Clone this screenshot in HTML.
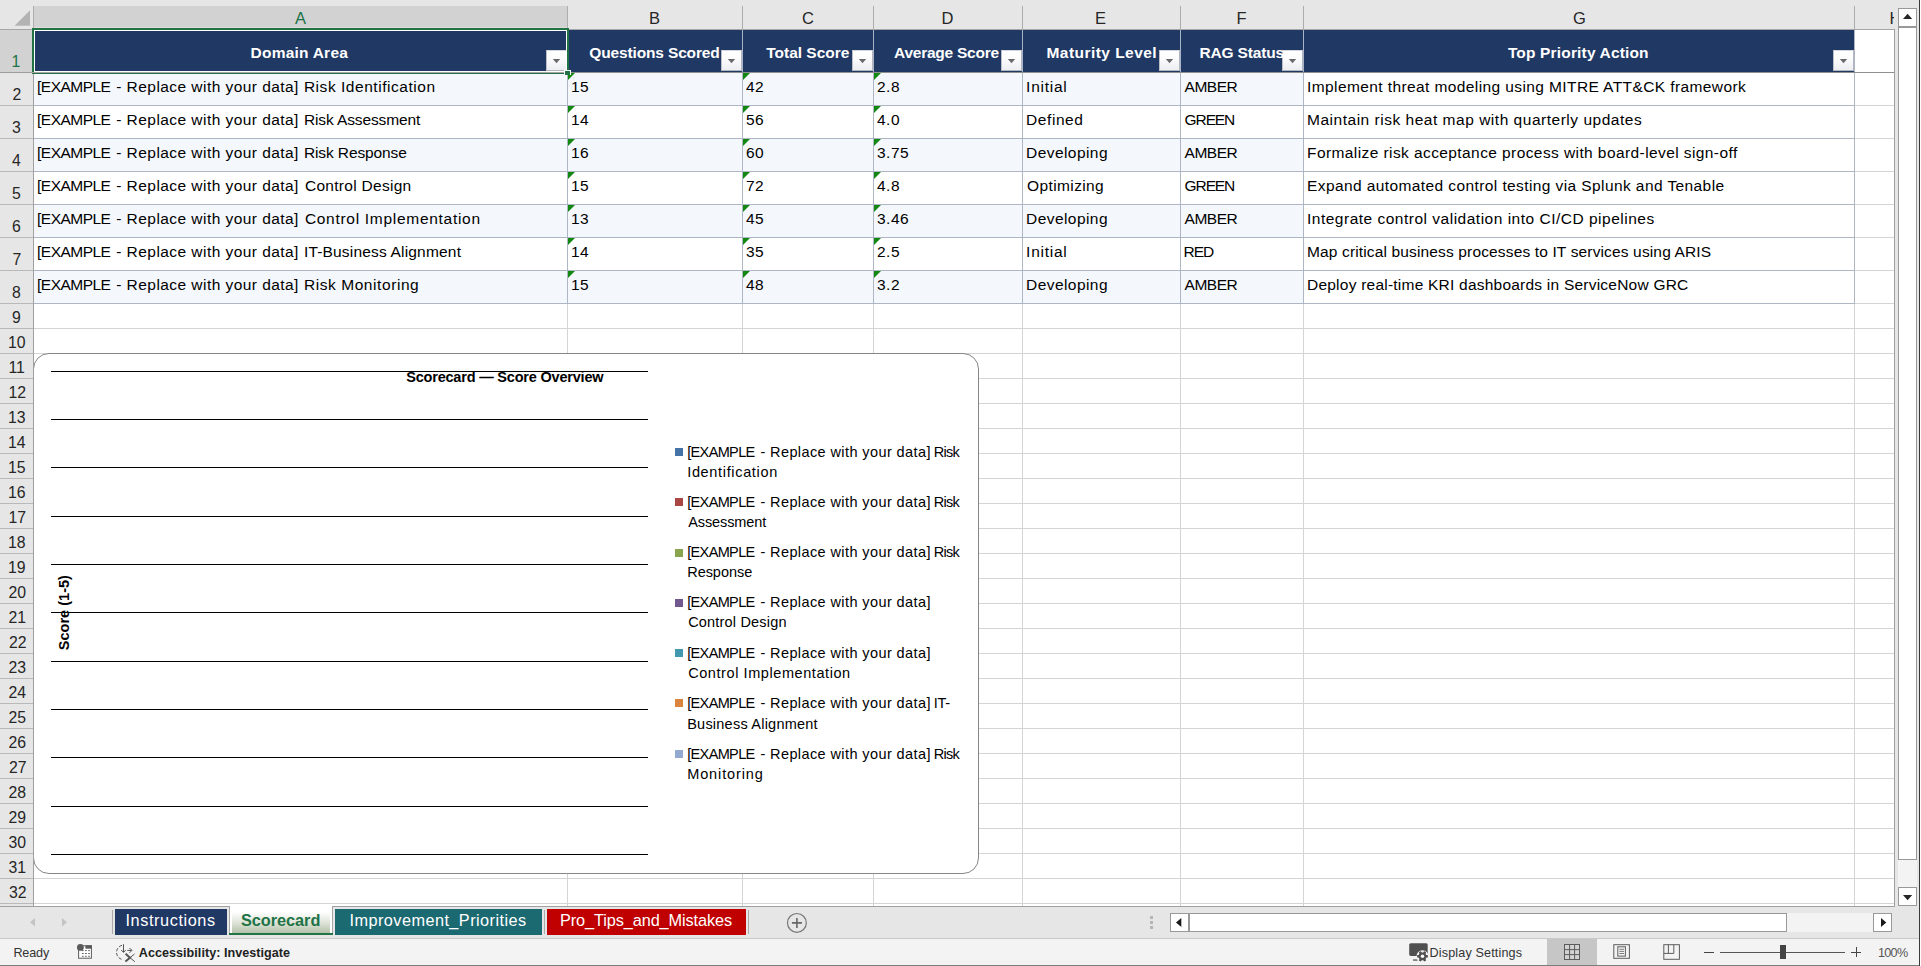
<!DOCTYPE html>
<html lang="en"><head><meta charset="utf-8"><title>Scorecard</title><style>
html,body{margin:0;padding:0}
body{width:1921px;height:966px;overflow:hidden;background:#e6e6e6;position:relative;font-family:"Liberation Sans",sans-serif}
.b{position:absolute}
.t{position:absolute;white-space:pre;color:#000}
svg{position:absolute;overflow:visible}
.fb{width:21px;height:21px;box-sizing:border-box;background:linear-gradient(#fff,#fcfcfd 40%,#eceef3);border:1px solid;border-color:#d4d5da #b1b5c0 #b4b6bd #bbbec7}
.sb{background:#fff;border:1px solid #999}
</style></head><body>
<div class="b" style="left:34px;top:30px;width:1860px;height:876px;background:#fff;"></div>
<div class="b" style="left:34px;top:6px;width:533px;height:22px;background:#d2d2d2;"></div>
<div class="b" style="left:34px;top:27px;width:533px;height:1px;background:#e0dcdc;"></div>
<div class="b" style="left:0px;top:29px;width:1895px;height:1px;background:#a6a6a6;"></div>
<div class="b" style="left:33px;top:6px;width:1px;height:23px;background:#adadad;"></div>
<div class="b" style="left:567px;top:6px;width:1px;height:23px;background:#adadad;"></div>
<div class="b" style="left:742px;top:6px;width:1px;height:23px;background:#adadad;"></div>
<div class="b" style="left:873px;top:6px;width:1px;height:23px;background:#adadad;"></div>
<div class="b" style="left:1022px;top:6px;width:1px;height:23px;background:#adadad;"></div>
<div class="b" style="left:1180px;top:6px;width:1px;height:23px;background:#adadad;"></div>
<div class="b" style="left:1303px;top:6px;width:1px;height:23px;background:#adadad;"></div>
<div class="b" style="left:1854px;top:6px;width:1px;height:23px;background:#adadad;"></div>
<div class="b" style="left:0px;top:30px;width:33px;height:42px;background:#d2d2d2;"></div>
<div class="b" style="left:0px;top:72px;width:33px;height:1px;background:#b9b9b9;"></div>
<div class="b" style="left:0px;top:105px;width:33px;height:1px;background:#b9b9b9;"></div>
<div class="b" style="left:0px;top:138px;width:33px;height:1px;background:#b9b9b9;"></div>
<div class="b" style="left:0px;top:171px;width:33px;height:1px;background:#b9b9b9;"></div>
<div class="b" style="left:0px;top:204px;width:33px;height:1px;background:#b9b9b9;"></div>
<div class="b" style="left:0px;top:237px;width:33px;height:1px;background:#b9b9b9;"></div>
<div class="b" style="left:0px;top:270px;width:33px;height:1px;background:#b9b9b9;"></div>
<div class="b" style="left:0px;top:303px;width:33px;height:1px;background:#b9b9b9;"></div>
<div class="b" style="left:0px;top:328px;width:33px;height:1px;background:#b9b9b9;"></div>
<div class="b" style="left:0px;top:353px;width:33px;height:1px;background:#b9b9b9;"></div>
<div class="b" style="left:0px;top:378px;width:33px;height:1px;background:#b9b9b9;"></div>
<div class="b" style="left:0px;top:403px;width:33px;height:1px;background:#b9b9b9;"></div>
<div class="b" style="left:0px;top:428px;width:33px;height:1px;background:#b9b9b9;"></div>
<div class="b" style="left:0px;top:453px;width:33px;height:1px;background:#b9b9b9;"></div>
<div class="b" style="left:0px;top:478px;width:33px;height:1px;background:#b9b9b9;"></div>
<div class="b" style="left:0px;top:503px;width:33px;height:1px;background:#b9b9b9;"></div>
<div class="b" style="left:0px;top:528px;width:33px;height:1px;background:#b9b9b9;"></div>
<div class="b" style="left:0px;top:553px;width:33px;height:1px;background:#b9b9b9;"></div>
<div class="b" style="left:0px;top:578px;width:33px;height:1px;background:#b9b9b9;"></div>
<div class="b" style="left:0px;top:603px;width:33px;height:1px;background:#b9b9b9;"></div>
<div class="b" style="left:0px;top:628px;width:33px;height:1px;background:#b9b9b9;"></div>
<div class="b" style="left:0px;top:653px;width:33px;height:1px;background:#b9b9b9;"></div>
<div class="b" style="left:0px;top:678px;width:33px;height:1px;background:#b9b9b9;"></div>
<div class="b" style="left:0px;top:703px;width:33px;height:1px;background:#b9b9b9;"></div>
<div class="b" style="left:0px;top:728px;width:33px;height:1px;background:#b9b9b9;"></div>
<div class="b" style="left:0px;top:753px;width:33px;height:1px;background:#b9b9b9;"></div>
<div class="b" style="left:0px;top:778px;width:33px;height:1px;background:#b9b9b9;"></div>
<div class="b" style="left:0px;top:803px;width:33px;height:1px;background:#b9b9b9;"></div>
<div class="b" style="left:0px;top:828px;width:33px;height:1px;background:#b9b9b9;"></div>
<div class="b" style="left:0px;top:853px;width:33px;height:1px;background:#b9b9b9;"></div>
<div class="b" style="left:0px;top:878px;width:33px;height:1px;background:#b9b9b9;"></div>
<div class="b" style="left:0px;top:903px;width:33px;height:1px;background:#b9b9b9;"></div>
<div class="b" style="left:33px;top:30px;width:1px;height:876px;background:#a0a0a0;"></div>
<div class="b" style="left:34px;top:72px;width:1860px;height:1px;background:#d4d4d4;"></div>
<div class="b" style="left:34px;top:105px;width:1860px;height:1px;background:#d4d4d4;"></div>
<div class="b" style="left:34px;top:138px;width:1860px;height:1px;background:#d4d4d4;"></div>
<div class="b" style="left:34px;top:171px;width:1860px;height:1px;background:#d4d4d4;"></div>
<div class="b" style="left:34px;top:204px;width:1860px;height:1px;background:#d4d4d4;"></div>
<div class="b" style="left:34px;top:237px;width:1860px;height:1px;background:#d4d4d4;"></div>
<div class="b" style="left:34px;top:270px;width:1860px;height:1px;background:#d4d4d4;"></div>
<div class="b" style="left:34px;top:303px;width:1860px;height:1px;background:#d4d4d4;"></div>
<div class="b" style="left:34px;top:328px;width:1860px;height:1px;background:#d4d4d4;"></div>
<div class="b" style="left:34px;top:353px;width:1860px;height:1px;background:#d4d4d4;"></div>
<div class="b" style="left:34px;top:378px;width:1860px;height:1px;background:#d4d4d4;"></div>
<div class="b" style="left:34px;top:403px;width:1860px;height:1px;background:#d4d4d4;"></div>
<div class="b" style="left:34px;top:428px;width:1860px;height:1px;background:#d4d4d4;"></div>
<div class="b" style="left:34px;top:453px;width:1860px;height:1px;background:#d4d4d4;"></div>
<div class="b" style="left:34px;top:478px;width:1860px;height:1px;background:#d4d4d4;"></div>
<div class="b" style="left:34px;top:503px;width:1860px;height:1px;background:#d4d4d4;"></div>
<div class="b" style="left:34px;top:528px;width:1860px;height:1px;background:#d4d4d4;"></div>
<div class="b" style="left:34px;top:553px;width:1860px;height:1px;background:#d4d4d4;"></div>
<div class="b" style="left:34px;top:578px;width:1860px;height:1px;background:#d4d4d4;"></div>
<div class="b" style="left:34px;top:603px;width:1860px;height:1px;background:#d4d4d4;"></div>
<div class="b" style="left:34px;top:628px;width:1860px;height:1px;background:#d4d4d4;"></div>
<div class="b" style="left:34px;top:653px;width:1860px;height:1px;background:#d4d4d4;"></div>
<div class="b" style="left:34px;top:678px;width:1860px;height:1px;background:#d4d4d4;"></div>
<div class="b" style="left:34px;top:703px;width:1860px;height:1px;background:#d4d4d4;"></div>
<div class="b" style="left:34px;top:728px;width:1860px;height:1px;background:#d4d4d4;"></div>
<div class="b" style="left:34px;top:753px;width:1860px;height:1px;background:#d4d4d4;"></div>
<div class="b" style="left:34px;top:778px;width:1860px;height:1px;background:#d4d4d4;"></div>
<div class="b" style="left:34px;top:803px;width:1860px;height:1px;background:#d4d4d4;"></div>
<div class="b" style="left:34px;top:828px;width:1860px;height:1px;background:#d4d4d4;"></div>
<div class="b" style="left:34px;top:853px;width:1860px;height:1px;background:#d4d4d4;"></div>
<div class="b" style="left:34px;top:878px;width:1860px;height:1px;background:#d4d4d4;"></div>
<div class="b" style="left:34px;top:903px;width:1860px;height:1px;background:#d4d4d4;"></div>
<div class="b" style="left:567px;top:30px;width:1px;height:876px;background:#d4d4d4;"></div>
<div class="b" style="left:742px;top:30px;width:1px;height:876px;background:#d4d4d4;"></div>
<div class="b" style="left:873px;top:30px;width:1px;height:876px;background:#d4d4d4;"></div>
<div class="b" style="left:1022px;top:30px;width:1px;height:876px;background:#d4d4d4;"></div>
<div class="b" style="left:1180px;top:30px;width:1px;height:876px;background:#d4d4d4;"></div>
<div class="b" style="left:1303px;top:30px;width:1px;height:876px;background:#d4d4d4;"></div>
<div class="b" style="left:1854px;top:30px;width:1px;height:876px;background:#d4d4d4;"></div>
<div class="b" style="left:34px;top:30px;width:1820px;height:42px;background:#1f3864;"></div>
<div class="b" style="left:567px;top:30px;width:1px;height:42px;background:#aab3c5;"></div>
<div class="b" style="left:742px;top:30px;width:1px;height:42px;background:#aab3c5;"></div>
<div class="b" style="left:873px;top:30px;width:1px;height:42px;background:#aab3c5;"></div>
<div class="b" style="left:1022px;top:30px;width:1px;height:42px;background:#aab3c5;"></div>
<div class="b" style="left:1180px;top:30px;width:1px;height:42px;background:#aab3c5;"></div>
<div class="b" style="left:1303px;top:30px;width:1px;height:42px;background:#aab3c5;"></div>
<div class="b" style="left:34px;top:73px;width:1269px;height:32px;background:#f4f7fc;"></div>
<div class="b" style="left:34px;top:139px;width:1269px;height:32px;background:#f4f7fc;"></div>
<div class="b" style="left:34px;top:205px;width:1269px;height:32px;background:#f4f7fc;"></div>
<div class="b" style="left:34px;top:271px;width:1269px;height:32px;background:#f4f7fc;"></div>
<div class="b" style="left:34px;top:72px;width:1821px;height:1px;background:#aeb6c4;"></div>
<div class="b" style="left:34px;top:105px;width:1821px;height:1px;background:#aeb6c4;"></div>
<div class="b" style="left:34px;top:138px;width:1821px;height:1px;background:#aeb6c4;"></div>
<div class="b" style="left:34px;top:171px;width:1821px;height:1px;background:#aeb6c4;"></div>
<div class="b" style="left:34px;top:204px;width:1821px;height:1px;background:#aeb6c4;"></div>
<div class="b" style="left:34px;top:237px;width:1821px;height:1px;background:#aeb6c4;"></div>
<div class="b" style="left:34px;top:270px;width:1821px;height:1px;background:#aeb6c4;"></div>
<div class="b" style="left:34px;top:303px;width:1821px;height:1px;background:#aeb6c4;"></div>
<div class="b" style="left:567px;top:72px;width:1px;height:232px;background:#aeb6c4;"></div>
<div class="b" style="left:742px;top:72px;width:1px;height:232px;background:#aeb6c4;"></div>
<div class="b" style="left:873px;top:72px;width:1px;height:232px;background:#aeb6c4;"></div>
<div class="b" style="left:1022px;top:72px;width:1px;height:232px;background:#aeb6c4;"></div>
<div class="b" style="left:1180px;top:72px;width:1px;height:232px;background:#aeb6c4;"></div>
<div class="b" style="left:1303px;top:72px;width:1px;height:232px;background:#aeb6c4;"></div>
<div class="b" style="left:1854px;top:72px;width:1px;height:232px;background:#aeb6c4;"></div>
<div class="b" style="left:1854px;top:30px;width:1px;height:42px;background:#aeb6c4;"></div>
<div class="b" style="left:0px;top:72px;width:33px;height:1px;background:#9c9c9c;"></div>
<div class="b" style="left:34px;top:72px;width:1860px;height:1px;background:#8f8f8f;"></div>
<div class="b" style="left:1894px;top:29px;width:1px;height:877px;background:#a0a0a0;"></div>
<div class="b" style="left:0px;top:906px;width:1895px;height:1px;background:#a0a0a0;"></div>
<svg style="left:0;top:0" width="34" height="30"><polygon points="30,10.3 30,25.7 14.6,25.7" fill="#b3b3b3"/></svg>
<div class="b fb" style="left:546px;top:50px"></div>
<svg style="left:546px;top:50px" width="21" height="21"><polygon points="6.8,9 14.2,9 10.5,13.3" fill="#6a6a6a"/></svg>
<div class="b fb" style="left:721px;top:50px"></div>
<svg style="left:721px;top:50px" width="21" height="21"><polygon points="6.8,9 14.2,9 10.5,13.3" fill="#6a6a6a"/></svg>
<div class="b fb" style="left:852px;top:50px"></div>
<svg style="left:852px;top:50px" width="21" height="21"><polygon points="6.8,9 14.2,9 10.5,13.3" fill="#6a6a6a"/></svg>
<div class="b fb" style="left:1001px;top:50px"></div>
<svg style="left:1001px;top:50px" width="21" height="21"><polygon points="6.8,9 14.2,9 10.5,13.3" fill="#6a6a6a"/></svg>
<div class="b fb" style="left:1159px;top:50px"></div>
<svg style="left:1159px;top:50px" width="21" height="21"><polygon points="6.8,9 14.2,9 10.5,13.3" fill="#6a6a6a"/></svg>
<div class="b fb" style="left:1282px;top:50px"></div>
<svg style="left:1282px;top:50px" width="21" height="21"><polygon points="6.8,9 14.2,9 10.5,13.3" fill="#6a6a6a"/></svg>
<div class="b fb" style="left:1833px;top:50px"></div>
<svg style="left:1833px;top:50px" width="21" height="21"><polygon points="6.8,9 14.2,9 10.5,13.3" fill="#6a6a6a"/></svg>
<svg style="left:568px;top:73px" width="8" height="8"><polygon points="0,0 7,0 0,7" fill="#128712"/></svg>
<svg style="left:568px;top:106px" width="8" height="8"><polygon points="0,0 7,0 0,7" fill="#128712"/></svg>
<svg style="left:568px;top:139px" width="8" height="8"><polygon points="0,0 7,0 0,7" fill="#128712"/></svg>
<svg style="left:568px;top:172px" width="8" height="8"><polygon points="0,0 7,0 0,7" fill="#128712"/></svg>
<svg style="left:568px;top:205px" width="8" height="8"><polygon points="0,0 7,0 0,7" fill="#128712"/></svg>
<svg style="left:568px;top:238px" width="8" height="8"><polygon points="0,0 7,0 0,7" fill="#128712"/></svg>
<svg style="left:568px;top:271px" width="8" height="8"><polygon points="0,0 7,0 0,7" fill="#128712"/></svg>
<svg style="left:743px;top:73px" width="8" height="8"><polygon points="0,0 7,0 0,7" fill="#128712"/></svg>
<svg style="left:743px;top:106px" width="8" height="8"><polygon points="0,0 7,0 0,7" fill="#128712"/></svg>
<svg style="left:743px;top:139px" width="8" height="8"><polygon points="0,0 7,0 0,7" fill="#128712"/></svg>
<svg style="left:743px;top:172px" width="8" height="8"><polygon points="0,0 7,0 0,7" fill="#128712"/></svg>
<svg style="left:743px;top:205px" width="8" height="8"><polygon points="0,0 7,0 0,7" fill="#128712"/></svg>
<svg style="left:743px;top:238px" width="8" height="8"><polygon points="0,0 7,0 0,7" fill="#128712"/></svg>
<svg style="left:743px;top:271px" width="8" height="8"><polygon points="0,0 7,0 0,7" fill="#128712"/></svg>
<svg style="left:874px;top:73px" width="8" height="8"><polygon points="0,0 7,0 0,7" fill="#128712"/></svg>
<svg style="left:874px;top:106px" width="8" height="8"><polygon points="0,0 7,0 0,7" fill="#128712"/></svg>
<svg style="left:874px;top:139px" width="8" height="8"><polygon points="0,0 7,0 0,7" fill="#128712"/></svg>
<svg style="left:874px;top:172px" width="8" height="8"><polygon points="0,0 7,0 0,7" fill="#128712"/></svg>
<svg style="left:874px;top:205px" width="8" height="8"><polygon points="0,0 7,0 0,7" fill="#128712"/></svg>
<svg style="left:874px;top:238px" width="8" height="8"><polygon points="0,0 7,0 0,7" fill="#128712"/></svg>
<svg style="left:874px;top:271px" width="8" height="8"><polygon points="0,0 7,0 0,7" fill="#128712"/></svg>
<div class="b" style="left:34px;top:30px;width:533px;height:1px;background:#fff;"></div>
<div class="b" style="left:34px;top:30px;width:1px;height:42px;background:#fff;"></div>
<div class="b" style="left:566px;top:30px;width:1px;height:42px;background:#fff;"></div>
<div class="b" style="left:34px;top:71px;width:533px;height:1px;background:#fff;"></div>
<div class="b" style="left:32px;top:28px;width:537px;height:2px;background:#217346;"></div>
<div class="b" style="left:32px;top:28px;width:2px;height:46px;background:#217346;"></div>
<div class="b" style="left:567px;top:28px;width:2px;height:43px;background:#217346;"></div>
<div class="b" style="left:32px;top:72px;width:533px;height:1px;background:#a9a4a4;"></div>
<div class="b" style="left:32px;top:73px;width:533px;height:1px;background:#217346;"></div>
<div class="b" style="left:564px;top:70px;width:7px;height:5px;background:#fff;"></div>
<div class="b" style="left:565px;top:71px;width:5px;height:4px;background:#217346;"></div>
<div class="b" style="left:33px;top:353px;width:944px;height:519px;background:#fff;border:1px solid #868686;border-radius:16px"></div>
<div class="b" style="left:33px;top:353px;width:1px;height:521px;background:#a0a0a0;"></div>
<div class="b" style="left:51px;top:371px;width:597px;height:1px;background:#000;"></div>
<div class="b" style="left:51px;top:419px;width:597px;height:1px;background:#000;"></div>
<div class="b" style="left:51px;top:467px;width:597px;height:1px;background:#000;"></div>
<div class="b" style="left:51px;top:516px;width:597px;height:1px;background:#000;"></div>
<div class="b" style="left:51px;top:564px;width:597px;height:1px;background:#000;"></div>
<div class="b" style="left:51px;top:612px;width:597px;height:1px;background:#000;"></div>
<div class="b" style="left:51px;top:661px;width:597px;height:1px;background:#000;"></div>
<div class="b" style="left:51px;top:709px;width:597px;height:1px;background:#000;"></div>
<div class="b" style="left:51px;top:757px;width:597px;height:1px;background:#000;"></div>
<div class="b" style="left:51px;top:806px;width:597px;height:1px;background:#000;"></div>
<div class="b" style="left:51px;top:854px;width:597px;height:1px;background:#000;"></div>
<div class="b" style="left:675px;top:448px;width:8px;height:8px;background:#4572a7;"></div>
<div class="b" style="left:675px;top:498px;width:8px;height:8px;background:#aa4643;"></div>
<div class="b" style="left:675px;top:549px;width:8px;height:8px;background:#89a54e;"></div>
<div class="b" style="left:675px;top:599px;width:8px;height:8px;background:#71588f;"></div>
<div class="b" style="left:675px;top:649px;width:8px;height:8px;background:#4198af;"></div>
<div class="b" style="left:675px;top:699px;width:8px;height:8px;background:#db843d;"></div>
<div class="b" style="left:675px;top:750px;width:8px;height:8px;background:#93a9cf;"></div>
<span class="t" style="left:0;top:0;font-size:14.5px;font-weight:700;line-height:18px;transform-origin:0 0;transform:translate(54.8px,650.2px) rotate(-90deg);letter-spacing:0.02px">Score (1-5)</span>
<div class="b" style="left:1895px;top:0px;width:26px;height:907px;background:#e6e6e6;"></div>
<div class="b sb" style="left:1898px;top:8px;width:17px;height:17px"></div>
<svg style="left:1898px;top:8px" width="20" height="20"><polygon points="5,11 14.2,11 9.6,5.8" fill="#262626"/></svg>
<div class="b sb" style="left:1898px;top:27px;width:17px;height:831px"></div>
<div class="b" style="left:1898px;top:860px;width:19px;height:27px;background:#f3f3f3;"></div>
<div class="b sb" style="left:1898px;top:887px;width:17px;height:17px"></div>
<svg style="left:1898px;top:887px" width="20" height="20"><polygon points="5,8 14.2,8 9.6,13.2" fill="#262626"/></svg>
<div class="b" style="left:1855px;top:6px;width:39px;height:23px;overflow:hidden"><span class="t" style="left:34.6px;top:2px;font-size:16.5px;line-height:21px;color:#262626">H</span></div>
<div class="b" style="left:0px;top:907px;width:1921px;height:31px;background:#e6e6e6;"></div>
<svg style="left:0;top:907px" width="110" height="31"><polygon points="35,11 35,19.6 30,15.3" fill="#c3c3c3"/><polygon points="62,11 62,19.6 67,15.3" fill="#c3c3c3"/></svg>
<div class="b" style="left:112px;top:910px;width:1px;height:24px;background:#a9a9a9;"></div>
<div class="b" style="left:115px;top:909px;width:112px;height:26px;background:#1f3864;"></div>
<div class="b" style="left:230px;top:906px;width:102px;height:27px;background:linear-gradient(#fff 0,#fff 22%,#dfe5da 60%,#b4c1ab 100%);border-left:2px solid #fff;border-right:2px solid #fff;box-sizing:border-box"></div>
<div class="b" style="left:229px;top:907px;width:1px;height:28px;background:#a6a6a6;"></div>
<div class="b" style="left:332px;top:907px;width:1px;height:28px;background:#a6a6a6;"></div>
<div class="b" style="left:229px;top:933px;width:104px;height:2px;background:#217346;"></div>
<div class="b" style="left:335px;top:909px;width:207px;height:26px;background:#1b6971;"></div>
<div class="b" style="left:544px;top:910px;width:1px;height:24px;background:#a9a9a9;"></div>
<div class="b" style="left:547px;top:909px;width:199px;height:26px;background:#c00000;"></div>
<div class="b" style="left:748px;top:910px;width:1px;height:24px;background:#a9a9a9;"></div>
<svg style="left:785px;top:911px" width="24" height="24"><circle cx="11.9" cy="11.9" r="9.4" fill="none" stroke="#777" stroke-width="1.2"/><path d="M6.9 11.9h10M11.9 6.9v10" stroke="#666" stroke-width="1.6" fill="none"/></svg>
<div class="b" style="left:1150px;top:916px;width:3px;height:3px;background:#b5b5b5;"></div>
<div class="b" style="left:1150px;top:921px;width:3px;height:3px;background:#b5b5b5;"></div>
<div class="b" style="left:1150px;top:926px;width:3px;height:3px;background:#b5b5b5;"></div>
<div class="b" style="left:1170px;top:913px;width:722px;height:19px;background:#f3f3f3;"></div>
<div class="b sb" style="left:1170px;top:913px;width:17px;height:17px"></div>
<svg style="left:1170px;top:913px" width="20" height="20"><polygon points="11.3,5 11.3,14 6,9.5" fill="#1a1a1a"/></svg>
<div class="b sb" style="left:1189px;top:913px;width:596px;height:17px"></div>
<div class="b sb" style="left:1873px;top:913px;width:17px;height:17px"></div>
<svg style="left:1873px;top:913px" width="20" height="20"><polygon points="8,5 8,14 13.3,9.5" fill="#1a1a1a"/></svg>
<div class="b" style="left:0px;top:938px;width:1921px;height:1px;background:#c9c9c9;"></div>
<div class="b" style="left:0px;top:939px;width:1921px;height:26px;background:#f3f3f3;"></div>
<div class="b" style="left:0px;top:965px;width:1921px;height:1px;background:#7d7d7d;"></div>
<div class="b" style="left:1547px;top:939px;width:50px;height:26px;background:#c6c6c6;"></div>
<svg style="left:1564px;top:944px" width="17" height="17" fill="none" stroke="#5c5c5c" stroke-width="1"><rect x="0.5" y="0.5" width="15" height="15" fill="#d2d2d2"/><path d="M5.6 0.5v15M10.6 0.5v15M0.5 5.6h15M0.5 10.6h15"/></svg>
<svg style="left:1613px;top:944px" width="18" height="16" fill="none" stroke="#5c5c5c" stroke-width="1"><rect x="0.8" y="0.7" width="15.6" height="13.6"/><rect x="4.8" y="2.8" width="7.6" height="9.3"/><path d="M6.4 5.3h4.6M6.4 7.4h4.6M6.4 9.5h4.6" stroke-width="0.8"/></svg>
<svg style="left:1663px;top:944px" width="18" height="17" fill="none" stroke="#5c5c5c" stroke-width="1"><rect x="0.8" y="0.7" width="15.6" height="14.6"/><path d="M5.4 0.7v8.7M10.8 0.7v8.7M0.8 9.4h10"/></svg>
<div class="b" style="left:1704px;top:952px;width:10px;height:1px;background:#444;"></div>
<div class="b" style="left:1720px;top:952px;width:125px;height:1px;background:#555;"></div>
<div class="b" style="left:1780px;top:945px;width:6px;height:14px;background:#444;"></div>
<div class="b" style="left:1851px;top:952px;width:10px;height:1px;background:#444;"></div>
<div class="b" style="left:1855.5px;top:947px;width:1px;height:10px;background:#444;"></div>
<svg style="left:77px;top:943px" width="16" height="17" fill="none" stroke="#5a5a5a" stroke-width="1"><rect x="1.6" y="2.8" width="12.8" height="12.4" fill="#fff"/><rect x="8.4" y="2.3" width="6.5" height="3.4" fill="#5a5a5a" stroke="none"/><circle cx="3.4" cy="4.4" r="3.4" fill="#5a5a5a" stroke="none"/><path d="M4.9 7.6h1.8M8 7.6h1.8M11.1 7.6h1.8M4.9 10.5h1.8M8 10.5h1.8M11.1 10.5h1.8M4.9 13.3h1.8M8 13.3h1.8M11.1 13.3h1.8" stroke-width="0.9"/></svg>
<svg style="left:115px;top:943px" width="22" height="20" fill="none" stroke="#555" stroke-width="1"><path d="M7 2.3A7.3 7.3 0 0 0 7.9 16.6" stroke-dasharray="3.3 1.7"/><path d="M8.5 1.2v8M6.2 7l2.3 2.4 2.3-2.4"/><path d="M12.3 7.4h4.4M14.5 5l2.4 2.4-2.4 2.4"/><path d="M10.6 10.8l4.4 3.9-4.6 3.8" stroke-width="2"/><path d="M19.5 11l-4.5 3.7 4.8 4" stroke-width="1"/></svg>
<svg style="left:1408px;top:942px" width="22" height="21" fill="#505050"><rect x="1.2" y="1.2" width="18.5" height="12.7" rx="1.6"/><rect x="5.1" y="17.4" width="4.4" height="1.3"/><circle cx="14.5" cy="14.3" r="6" fill="#f3f3f3"/><rect x="13.3" y="8.9" width="2.4" height="10.8" rx="0.5" transform="rotate(30 14.5 14.3)"/><rect x="13.3" y="8.9" width="2.4" height="10.8" rx="0.5" transform="rotate(90 14.5 14.3)"/><rect x="13.3" y="8.9" width="2.4" height="10.8" rx="0.5" transform="rotate(150 14.5 14.3)"/><circle cx="14.5" cy="14.3" r="3.9"/><circle cx="14.5" cy="14.3" r="1.7" fill="#fff"/></svg>
<div class="b" style="left:1919px;top:0px;width:1px;height:966px;background:#3a3a3a;"></div>
<div class="b" style="left:1920px;top:0px;width:1px;height:966px;background:#fff;"></div>
<span class="t" style="left:250.60px;top:43px;font-size:15.5px;line-height:19px;letter-spacing:0.221px;font-weight:700;color:#fff;">Domain Area</span>
<span class="t" style="left:589.30px;top:43px;font-size:15.5px;line-height:19px;letter-spacing:-0.145px;font-weight:700;color:#fff;">Questions Scored</span>
<span class="t" style="left:766.30px;top:43px;font-size:15.5px;line-height:19px;letter-spacing:-0.024px;font-weight:700;color:#fff;">Total Score</span>
<span class="t" style="left:894.00px;top:43px;font-size:15.5px;line-height:19px;letter-spacing:-0.239px;font-weight:700;color:#fff;">Average Score</span>
<span class="t" style="left:1046.50px;top:43px;font-size:15.5px;line-height:19px;letter-spacing:0.453px;font-weight:700;color:#fff;">Maturity Level</span>
<span class="t" style="left:1199.50px;top:43px;font-size:15.5px;line-height:19px;letter-spacing:-0.167px;font-weight:700;color:#fff;">RAG Status</span>
<span class="t" style="left:1507.90px;top:43px;font-size:15.5px;line-height:19px;letter-spacing:0.162px;font-weight:700;color:#fff;">Top Priority Action</span>
<span class="t" style="left:37.10px;top:77px;font-size:15.5px;line-height:19px;letter-spacing:-0.527px;">[EXAMPLE </span>
<span class="t" style="left:116.25px;top:77px;font-size:15.5px;line-height:19px;letter-spacing:0.446px;">- Replace with your data] </span>
<span class="t" style="left:303.90px;top:77px;font-size:15.5px;line-height:19px;letter-spacing:0.536px;">Risk Identification</span>
<span class="t" style="left:571.00px;top:77px;font-size:15.5px;line-height:19px;letter-spacing:0.500px;">15</span>
<span class="t" style="left:745.90px;top:77px;font-size:15.5px;line-height:19px;letter-spacing:0.500px;">42</span>
<span class="t" style="left:877.00px;top:77px;font-size:15.5px;line-height:19px;letter-spacing:0.500px;">2.8</span>
<span class="t" style="left:1026.10px;top:77px;font-size:15.5px;line-height:19px;letter-spacing:0.735px;">Initial</span>
<span class="t" style="left:1184.60px;top:77px;font-size:15.5px;line-height:19px;letter-spacing:-0.507px;">AMBER</span>
<span class="t" style="left:1307.00px;top:77px;font-size:15.5px;line-height:19px;letter-spacing:0.402px;">Implement threat modeling using MITRE ATT&amp;CK framework</span>
<span class="t" style="left:37.10px;top:110px;font-size:15.5px;line-height:19px;letter-spacing:-0.527px;">[EXAMPLE </span>
<span class="t" style="left:116.25px;top:110px;font-size:15.5px;line-height:19px;letter-spacing:0.446px;">- Replace with your data] </span>
<span class="t" style="left:303.90px;top:110px;font-size:15.5px;line-height:19px;letter-spacing:-0.111px;">Risk Assessment</span>
<span class="t" style="left:571.00px;top:110px;font-size:15.5px;line-height:19px;letter-spacing:0.500px;">14</span>
<span class="t" style="left:745.90px;top:110px;font-size:15.5px;line-height:19px;letter-spacing:0.500px;">56</span>
<span class="t" style="left:877.00px;top:110px;font-size:15.5px;line-height:19px;letter-spacing:0.500px;">4.0</span>
<span class="t" style="left:1026.10px;top:110px;font-size:15.5px;line-height:19px;letter-spacing:0.558px;">Defined</span>
<span class="t" style="left:1184.60px;top:110px;font-size:15.5px;line-height:19px;letter-spacing:-1.107px;">GREEN</span>
<span class="t" style="left:1307.00px;top:110px;font-size:15.5px;line-height:19px;letter-spacing:0.518px;">Maintain risk heat map with quarterly updates</span>
<span class="t" style="left:37.10px;top:143px;font-size:15.5px;line-height:19px;letter-spacing:-0.527px;">[EXAMPLE </span>
<span class="t" style="left:116.25px;top:143px;font-size:15.5px;line-height:19px;letter-spacing:0.446px;">- Replace with your data] </span>
<span class="t" style="left:303.90px;top:143px;font-size:15.5px;line-height:19px;letter-spacing:-0.106px;">Risk Response</span>
<span class="t" style="left:571.00px;top:143px;font-size:15.5px;line-height:19px;letter-spacing:0.500px;">16</span>
<span class="t" style="left:745.90px;top:143px;font-size:15.5px;line-height:19px;letter-spacing:0.500px;">60</span>
<span class="t" style="left:877.00px;top:143px;font-size:15.5px;line-height:19px;letter-spacing:0.500px;">3.75</span>
<span class="t" style="left:1026.10px;top:143px;font-size:15.5px;line-height:19px;letter-spacing:0.430px;">Developing</span>
<span class="t" style="left:1184.60px;top:143px;font-size:15.5px;line-height:19px;letter-spacing:-0.507px;">AMBER</span>
<span class="t" style="left:1307.00px;top:143px;font-size:15.5px;line-height:19px;letter-spacing:0.412px;">Formalize risk acceptance process with board-level sign-off</span>
<span class="t" style="left:37.10px;top:176px;font-size:15.5px;line-height:19px;letter-spacing:-0.527px;">[EXAMPLE </span>
<span class="t" style="left:116.25px;top:176px;font-size:15.5px;line-height:19px;letter-spacing:0.446px;">- Replace with your data] </span>
<span class="t" style="left:304.90px;top:176px;font-size:15.5px;line-height:19px;letter-spacing:0.292px;">Control Design</span>
<span class="t" style="left:571.00px;top:176px;font-size:15.5px;line-height:19px;letter-spacing:0.500px;">15</span>
<span class="t" style="left:745.90px;top:176px;font-size:15.5px;line-height:19px;letter-spacing:0.500px;">72</span>
<span class="t" style="left:877.00px;top:176px;font-size:15.5px;line-height:19px;letter-spacing:0.500px;">4.8</span>
<span class="t" style="left:1027.10px;top:176px;font-size:15.5px;line-height:19px;letter-spacing:0.378px;">Optimizing</span>
<span class="t" style="left:1184.60px;top:176px;font-size:15.5px;line-height:19px;letter-spacing:-1.107px;">GREEN</span>
<span class="t" style="left:1307.00px;top:176px;font-size:15.5px;line-height:19px;letter-spacing:0.405px;">Expand automated control testing via Splunk and Tenable</span>
<span class="t" style="left:37.10px;top:209px;font-size:15.5px;line-height:19px;letter-spacing:-0.527px;">[EXAMPLE </span>
<span class="t" style="left:116.25px;top:209px;font-size:15.5px;line-height:19px;letter-spacing:0.446px;">- Replace with your data] </span>
<span class="t" style="left:304.90px;top:209px;font-size:15.5px;line-height:19px;letter-spacing:0.708px;">Control Implementation</span>
<span class="t" style="left:571.00px;top:209px;font-size:15.5px;line-height:19px;letter-spacing:0.500px;">13</span>
<span class="t" style="left:745.90px;top:209px;font-size:15.5px;line-height:19px;letter-spacing:0.500px;">45</span>
<span class="t" style="left:877.00px;top:209px;font-size:15.5px;line-height:19px;letter-spacing:0.500px;">3.46</span>
<span class="t" style="left:1026.10px;top:209px;font-size:15.5px;line-height:19px;letter-spacing:0.430px;">Developing</span>
<span class="t" style="left:1184.60px;top:209px;font-size:15.5px;line-height:19px;letter-spacing:-0.507px;">AMBER</span>
<span class="t" style="left:1307.00px;top:209px;font-size:15.5px;line-height:19px;letter-spacing:0.501px;">Integrate control validation into CI/CD pipelines</span>
<span class="t" style="left:37.10px;top:242px;font-size:15.5px;line-height:19px;letter-spacing:-0.527px;">[EXAMPLE </span>
<span class="t" style="left:116.25px;top:242px;font-size:15.5px;line-height:19px;letter-spacing:0.446px;">- Replace with your data] </span>
<span class="t" style="left:303.90px;top:242px;font-size:15.5px;line-height:19px;letter-spacing:0.185px;">IT-Business Alignment</span>
<span class="t" style="left:571.00px;top:242px;font-size:15.5px;line-height:19px;letter-spacing:0.500px;">14</span>
<span class="t" style="left:745.90px;top:242px;font-size:15.5px;line-height:19px;letter-spacing:0.500px;">35</span>
<span class="t" style="left:877.00px;top:242px;font-size:15.5px;line-height:19px;letter-spacing:0.500px;">2.5</span>
<span class="t" style="left:1026.10px;top:242px;font-size:15.5px;line-height:19px;letter-spacing:0.735px;">Initial</span>
<span class="t" style="left:1183.60px;top:242px;font-size:15.5px;line-height:19px;letter-spacing:-1.066px;">RED</span>
<span class="t" style="left:1307.00px;top:242px;font-size:15.5px;line-height:19px;letter-spacing:0.145px;">Map critical business processes to IT services using ARIS</span>
<span class="t" style="left:37.10px;top:275px;font-size:15.5px;line-height:19px;letter-spacing:-0.527px;">[EXAMPLE </span>
<span class="t" style="left:116.25px;top:275px;font-size:15.5px;line-height:19px;letter-spacing:0.446px;">- Replace with your data] </span>
<span class="t" style="left:303.90px;top:275px;font-size:15.5px;line-height:19px;letter-spacing:0.572px;">Risk Monitoring</span>
<span class="t" style="left:571.00px;top:275px;font-size:15.5px;line-height:19px;letter-spacing:0.500px;">15</span>
<span class="t" style="left:745.90px;top:275px;font-size:15.5px;line-height:19px;letter-spacing:0.500px;">48</span>
<span class="t" style="left:877.00px;top:275px;font-size:15.5px;line-height:19px;letter-spacing:0.500px;">3.2</span>
<span class="t" style="left:1026.10px;top:275px;font-size:15.5px;line-height:19px;letter-spacing:0.430px;">Developing</span>
<span class="t" style="left:1184.60px;top:275px;font-size:15.5px;line-height:19px;letter-spacing:-0.507px;">AMBER</span>
<span class="t" style="left:1307.00px;top:275px;font-size:15.5px;line-height:19px;letter-spacing:0.227px;">Deploy real-time KRI dashboards in ServiceNow GRC</span>
<span class="t" style="left:295.00px;top:8px;font-size:16.5px;line-height:21px;color:#217346;">A</span>
<span class="t" style="left:649.00px;top:8px;font-size:16.5px;line-height:21px;color:#262626;">B</span>
<span class="t" style="left:802.00px;top:8px;font-size:16.5px;line-height:21px;color:#262626;">C</span>
<span class="t" style="left:941.50px;top:8px;font-size:16.5px;line-height:21px;color:#262626;">D</span>
<span class="t" style="left:1095.00px;top:8px;font-size:16.5px;line-height:21px;color:#262626;">E</span>
<span class="t" style="left:1236.50px;top:8px;font-size:16.5px;line-height:21px;color:#262626;">F</span>
<span class="t" style="left:1573.00px;top:8px;font-size:16.5px;line-height:21px;color:#262626;">G</span>
<span class="t" style="left:11.40px;top:52px;font-size:15.8px;line-height:20px;color:#217346;">1</span>
<span class="t" style="left:12.40px;top:85px;font-size:15.8px;line-height:20px;color:#262626;">2</span>
<span class="t" style="left:11.90px;top:118px;font-size:15.8px;line-height:20px;color:#262626;">3</span>
<span class="t" style="left:11.90px;top:151px;font-size:15.8px;line-height:20px;color:#262626;">4</span>
<span class="t" style="left:11.90px;top:184px;font-size:15.8px;line-height:20px;color:#262626;">5</span>
<span class="t" style="left:11.90px;top:217px;font-size:15.8px;line-height:20px;color:#262626;">6</span>
<span class="t" style="left:12.40px;top:250px;font-size:15.8px;line-height:20px;color:#262626;">7</span>
<span class="t" style="left:11.90px;top:283px;font-size:15.8px;line-height:20px;color:#262626;">8</span>
<span class="t" style="left:11.90px;top:308px;font-size:15.8px;line-height:20px;color:#262626;">9</span>
<span class="t" style="left:7.91px;top:333px;font-size:15.8px;line-height:20px;color:#262626;">10</span>
<span class="t" style="left:8.49px;top:358px;font-size:15.8px;line-height:20px;color:#262626;">11</span>
<span class="t" style="left:8.41px;top:383px;font-size:15.8px;line-height:20px;color:#262626;">12</span>
<span class="t" style="left:7.91px;top:408px;font-size:15.8px;line-height:20px;color:#262626;">13</span>
<span class="t" style="left:7.91px;top:433px;font-size:15.8px;line-height:20px;color:#262626;">14</span>
<span class="t" style="left:7.91px;top:458px;font-size:15.8px;line-height:20px;color:#262626;">15</span>
<span class="t" style="left:7.91px;top:483px;font-size:15.8px;line-height:20px;color:#262626;">16</span>
<span class="t" style="left:8.41px;top:508px;font-size:15.8px;line-height:20px;color:#262626;">17</span>
<span class="t" style="left:7.91px;top:533px;font-size:15.8px;line-height:20px;color:#262626;">18</span>
<span class="t" style="left:7.91px;top:558px;font-size:15.8px;line-height:20px;color:#262626;">19</span>
<span class="t" style="left:8.41px;top:583px;font-size:15.8px;line-height:20px;color:#262626;">20</span>
<span class="t" style="left:8.41px;top:608px;font-size:15.8px;line-height:20px;color:#262626;">21</span>
<span class="t" style="left:8.91px;top:633px;font-size:15.8px;line-height:20px;color:#262626;">22</span>
<span class="t" style="left:8.41px;top:658px;font-size:15.8px;line-height:20px;color:#262626;">23</span>
<span class="t" style="left:8.41px;top:683px;font-size:15.8px;line-height:20px;color:#262626;">24</span>
<span class="t" style="left:8.41px;top:708px;font-size:15.8px;line-height:20px;color:#262626;">25</span>
<span class="t" style="left:8.41px;top:733px;font-size:15.8px;line-height:20px;color:#262626;">26</span>
<span class="t" style="left:8.91px;top:758px;font-size:15.8px;line-height:20px;color:#262626;">27</span>
<span class="t" style="left:8.41px;top:783px;font-size:15.8px;line-height:20px;color:#262626;">28</span>
<span class="t" style="left:8.41px;top:808px;font-size:15.8px;line-height:20px;color:#262626;">29</span>
<span class="t" style="left:8.41px;top:833px;font-size:15.8px;line-height:20px;color:#262626;">30</span>
<span class="t" style="left:8.41px;top:858px;font-size:15.8px;line-height:20px;color:#262626;">31</span>
<span class="t" style="left:8.91px;top:883px;font-size:15.8px;line-height:20px;color:#262626;">32</span>
<span class="t" style="left:406.20px;top:368px;font-size:14.5px;line-height:18px;letter-spacing:-0.197px;font-weight:700;">Scorecard — Score Overview</span>
<span class="t" style="left:687.20px;top:443px;font-size:14.5px;line-height:18px;letter-spacing:-0.637px;">[EXAMPLE </span>
<span class="t" style="left:760.40px;top:443px;font-size:14.5px;line-height:18px;letter-spacing:0.402px;">- Replace with your data] </span>
<span class="t" style="left:933.80px;top:443px;font-size:14.5px;line-height:18px;letter-spacing:-0.748px;">Risk</span>
<span class="t" style="left:687.20px;top:463px;font-size:14.5px;line-height:18px;letter-spacing:0.665px;">Identification</span>
<span class="t" style="left:687.20px;top:493px;font-size:14.5px;line-height:18px;letter-spacing:-0.637px;">[EXAMPLE </span>
<span class="t" style="left:760.40px;top:493px;font-size:14.5px;line-height:18px;letter-spacing:0.402px;">- Replace with your data] </span>
<span class="t" style="left:933.80px;top:493px;font-size:14.5px;line-height:18px;letter-spacing:-0.748px;">Risk</span>
<span class="t" style="left:688.20px;top:513px;font-size:14.5px;line-height:18px;letter-spacing:-0.094px;">Assessment</span>
<span class="t" style="left:687.20px;top:543px;font-size:14.5px;line-height:18px;letter-spacing:-0.637px;">[EXAMPLE </span>
<span class="t" style="left:760.40px;top:543px;font-size:14.5px;line-height:18px;letter-spacing:0.402px;">- Replace with your data] </span>
<span class="t" style="left:933.80px;top:543px;font-size:14.5px;line-height:18px;letter-spacing:-0.748px;">Risk</span>
<span class="t" style="left:687.20px;top:563px;font-size:14.5px;line-height:18px;letter-spacing:-0.033px;">Response</span>
<span class="t" style="left:687.20px;top:593px;font-size:14.5px;line-height:18px;letter-spacing:-0.637px;">[EXAMPLE </span>
<span class="t" style="left:760.40px;top:593px;font-size:14.5px;line-height:18px;letter-spacing:0.402px;">- Replace with your data]</span>
<span class="t" style="left:688.20px;top:613px;font-size:14.5px;line-height:18px;letter-spacing:0.181px;">Control Design</span>
<span class="t" style="left:687.20px;top:644px;font-size:14.5px;line-height:18px;letter-spacing:-0.637px;">[EXAMPLE </span>
<span class="t" style="left:760.40px;top:644px;font-size:14.5px;line-height:18px;letter-spacing:0.402px;">- Replace with your data]</span>
<span class="t" style="left:688.20px;top:664px;font-size:14.5px;line-height:18px;letter-spacing:0.574px;">Control Implementation</span>
<span class="t" style="left:687.20px;top:694px;font-size:14.5px;line-height:18px;letter-spacing:-0.637px;">[EXAMPLE </span>
<span class="t" style="left:760.40px;top:694px;font-size:14.5px;line-height:18px;letter-spacing:0.402px;">- Replace with your data] </span>
<span class="t" style="left:933.80px;top:694px;font-size:14.5px;line-height:18px;letter-spacing:-0.343px;">IT-</span>
<span class="t" style="left:687.20px;top:715px;font-size:14.5px;line-height:18px;letter-spacing:0.229px;">Business Alignment</span>
<span class="t" style="left:687.20px;top:745px;font-size:14.5px;line-height:18px;letter-spacing:-0.637px;">[EXAMPLE </span>
<span class="t" style="left:760.40px;top:745px;font-size:14.5px;line-height:18px;letter-spacing:0.402px;">- Replace with your data] </span>
<span class="t" style="left:933.80px;top:745px;font-size:14.5px;line-height:18px;letter-spacing:-0.748px;">Risk</span>
<span class="t" style="left:687.20px;top:765px;font-size:14.5px;line-height:18px;letter-spacing:0.879px;">Monitoring</span>
<span class="t" style="left:125.50px;top:910px;font-size:16.3px;line-height:20px;letter-spacing:0.581px;color:#fff;">Instructions</span>
<span class="t" style="left:241.00px;top:910px;font-size:16.3px;line-height:20px;letter-spacing:-0.037px;font-weight:700;color:#217346;">Scorecard</span>
<span class="t" style="left:349.50px;top:910px;font-size:16.3px;line-height:20px;letter-spacing:0.440px;color:#fff;">Improvement_Priorities</span>
<span class="t" style="left:560.00px;top:910px;font-size:16.3px;line-height:20px;letter-spacing:-0.096px;color:#fff;">Pro_Tips_and_Mistakes</span>
<span class="t" style="left:13.40px;top:945px;font-size:12.6px;line-height:16px;letter-spacing:-0.127px;color:#333;">Ready</span>
<span class="t" style="left:138.80px;top:945px;font-size:12.6px;line-height:16px;letter-spacing:0.029px;font-weight:700;color:#222;">Accessibility: Investigate</span>
<span class="t" style="left:1429.50px;top:945px;font-size:12.6px;line-height:16px;letter-spacing:0.147px;color:#333;">Display Settings</span>
<span class="t" style="left:1877.90px;top:945px;font-size:12.6px;line-height:16px;letter-spacing:-0.671px;color:#555;">100%</span>
</body></html>
